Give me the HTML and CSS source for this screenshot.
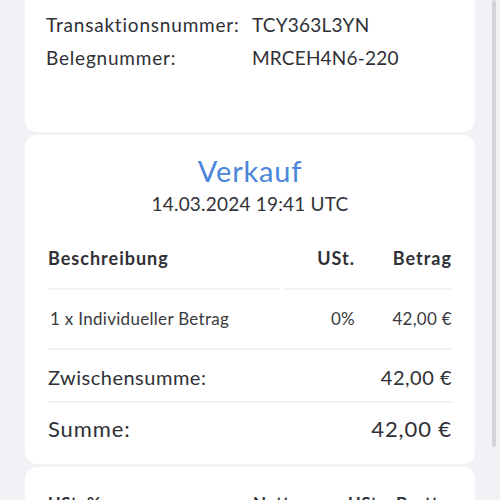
FILE: index.html
```html
<!DOCTYPE html>
<html lang="de">
<head>
    <meta charset="UTF-8">
    <meta name="viewport" content="width=device-width, initial-scale=1.0">
    <title>Beleg</title>
    <link rel="stylesheet" href="styles.css">
</head>
<body>
    <div class="page">
        <!-- Belegdaten -->
        <section class="card card-info">
            <div class="info-row">
                <span class="info-label">Transaktionsnummer:</span>
                <span class="info-value">TCY363L3YN</span>
            </div>
            <div class="info-row">
                <span class="info-label">Belegnummer:</span>
                <span class="info-value">MRCEH4N6-220</span>
            </div>
        </section>

        <!-- Verkauf -->
        <section class="card card-sale">
            <h1 class="sale-title">Verkauf</h1>
            <p class="sale-date">14.03.2024 19:41 UTC</p>

            <div class="items">
                <div class="items-head">
                    <span class="col-desc">Beschreibung</span>
                    <span class="col-tax">USt.</span>
                    <span class="col-amount">Betrag</span>
                </div>
                <div class="items-row">
                    <span class="col-desc">1 x Individueller Betrag</span>
                    <span class="col-tax">0%</span>
                    <span class="col-amount">42,00 €</span>
                </div>
            </div>

            <div class="total-row subtotal">
                <span>Zwischensumme:</span>
                <span>42,00 €</span>
            </div>
            <div class="total-row total">
                <span>Summe:</span>
                <span>42,00 €</span>
            </div>
        </section>

        <!-- Steuern -->
        <section class="card card-tax">
            <div class="tax-head">
                <span class="tax-rate">USt. %</span>
                <span class="tax-net">Netto</span>
                <span class="tax-vat">USt.</span>
                <span class="tax-gross">Brutto</span>
            </div>
        </section>
    </div>
    <div class="scroll-thumb"></div>
</body>
</html>
```

FILE: styles.css
```css
/* Global Styling */
body {
    margin: 0;
    background: #f2f1f5;
    font-family: Lato, "Noto Sans", sans-serif;
    color: #303036;
    overflow: hidden;
}

.page {
    width: 450px;
    margin: -14px 0 0 25px;
    display: flex;
    flex-direction: column;
    gap: 3px;
}

/* Cards */
.card {
    background: #ffffff;
    border-radius: 12px;
}

.card-info {
    padding: 22px 20px 0 21px;
    height: 146px;
    box-sizing: border-box;
}

.info-row {
    display: flex;
    font-size: 19px;
    line-height: 33px;
}

.info-label {
    width: 206px;
    letter-spacing: 0.8px;
}

.info-value {
    letter-spacing: 0.2px;
}

/* Verkauf */
.card-sale {
    padding: 21px 23px 7px 23px;
}

.sale-title {
    margin: 0;
    text-align: center;
    font-size: 29px;
    font-weight: 400;
    line-height: 30px;
    letter-spacing: 0.8px;
    color: #4a86da;
}

.sale-date {
    margin: 6px 0 0;
    text-align: center;
    font-size: 19px;
    line-height: 24px;
    letter-spacing: 0.2px;
    color: #333338;
}

.items {
    margin-top: 30px;
}

.items-head,
.items-row {
    display: grid;
    grid-template-columns: 236px 71px 97px;
}

.items-head span {
    font-weight: 700;
    font-size: 18px;
    letter-spacing: 1px;
    line-height: 24px;
    padding-bottom: 18px;
    border-bottom: 2px solid #f2f1f5;
}

.items-head .col-desc {
    margin-right: 4px;
}

.items-row span {
    font-size: 17px;
    line-height: 58px;
    letter-spacing: 0.3px;
    color: #3a3a40;
    border-bottom: 2px solid #f2f1f5;
}

.items-row .col-desc {
    padding-left: 2px;
}

.col-tax,
.col-amount {
    text-align: right;
}

.total-row {
    display: flex;
    justify-content: space-between;
}

.subtotal {
    font-size: 20px;
    line-height: 48px;
    letter-spacing: 0.5px;
    padding-top: 3px;
    border-bottom: 2px solid #f2f1f5;
}

.total {
    font-size: 22px;
    line-height: 52px;
    letter-spacing: 0.9px;
    padding-bottom: 2px;
}

/* Steuern */
.card-tax {
    padding: 24px 23px 20px 23px;
}

.tax-head {
    display: grid;
    grid-template-columns: 205px 95px 48px 56px;
    font-weight: 700;
    font-size: 17px;
    line-height: 24px;
    letter-spacing: 0.6px;
}

/* Scrollbar */
.scroll-thumb {
    position: fixed;
    top: 0;
    right: 4px;
    width: 4px;
    height: 447px;
    background: #d4d4d8;
    border-radius: 2px;
}
```
